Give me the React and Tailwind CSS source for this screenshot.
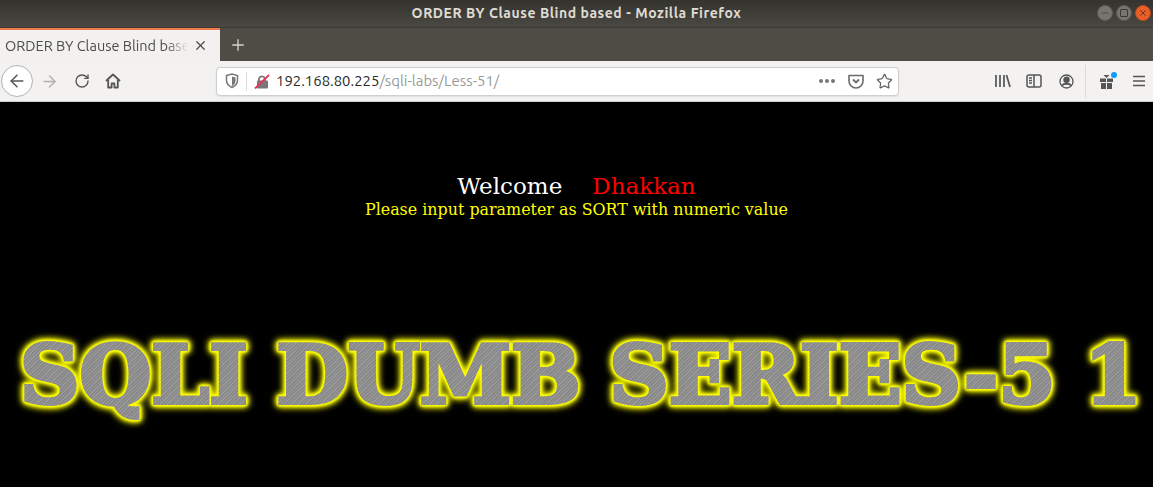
import React from 'react';
import { ArrowLeft, ArrowRight, RotateCw, Plus, X, Minus, Star } from 'lucide-react';

const UI_FONT = "font-['Ubuntu','Noto_Sans','Open_Sans',sans-serif]";

const WindowButton = ({ className, children }) => (
  <div className={`w-[16px] h-[16px] rounded-full flex items-center justify-center ${className}`}>
    {children}
  </div>
);

const TitleBar = () => (
  <div className="relative h-[28px] flex items-center justify-center bg-gradient-to-b from-[#34332f] to-[#4a4842] border-b border-[#3a3934]">
    <span className={`text-[14px] tracking-[0.55px] font-bold text-[#dfdbd2] ${UI_FONT}`}>ORDER BY Clause Blind based - Mozilla Firefox</span>
    <div className="absolute right-[2px] top-[5px] flex gap-[3px]">
      <WindowButton className="bg-[#77756f] border border-[#5c5a55]"><Minus size={10} strokeWidth={1.5} className="text-[#3a3934]" /></WindowButton>
      <WindowButton className="bg-[#77756f] border border-[#5c5a55]"><div className="w-[8px] h-[8px] border border-[#3a3934] rounded-[1px]" /></WindowButton>
      <WindowButton className="bg-[#e95f2a] border border-[#b9491f]"><X size={10} strokeWidth={1.8} className="text-[#3a2a20]" /></WindowButton>
    </div>
  </div>
);

const TabStrip = () => (
  <div className="h-[33px] flex bg-[#4f4c45]">
    <div className="w-[220px] bg-[#f2f1ef] border-t-2 border-[#f07a4d] flex items-center pl-[5px] pr-[12px]">
      <span className={`flex-1 overflow-hidden whitespace-nowrap text-[14.5px] text-[#4c4c4c] [mask-image:linear-gradient(to_right,black_88%,transparent)] ${UI_FONT}`}>
        ORDER BY Clause Blind based
      </span>
      <X size={15} strokeWidth={2} className="ml-[5px] text-[#4c4c4c]" />
    </div>
    <div className="w-[35px] flex items-center justify-center">
      <Plus size={18} strokeWidth={1.8} className="text-[#d6d3cc]" />
    </div>
  </div>
);

const HomeIcon = () => (
  <svg width="16" height="16" viewBox="0 0 16 16" fill="none" stroke="#555" strokeWidth="1.8">
    <path d="M1 8 8 1.500 15 8" strokeLinejoin="round" />
    <path d="M3.200 7v7.500h3.400v-4h2.800v4h3.400V7" strokeLinejoin="round" />
  </svg>
);

const ShieldIcon = () => (
  <svg width="14" height="16" viewBox="0 0 14 16" fill="none">
    <path d="M1.500 2.500 7 1l5.500 1.500v5c0 3.500-2.500 5.500-5.500 7-3-1.500-5.500-3.500-5.500-7z" stroke="#777" strokeWidth="1.500" />
    <path d="M7 3.500v9.500c2-1 3.500-2.500 3.500-5.500V4.500z" fill="#777" />
  </svg>
);

const InsecureLock = () => (
  <svg width="16" height="16" viewBox="0 0 16 16">
    <path d="M5 8V5.500a3.200 3.200 0 0 1 6 0V8" fill="none" stroke="#777" strokeWidth="1.800" />
    <rect x="3" y="7.500" width="11" height="8" rx="1" fill="#777" />
    <path d="M1 15.500 15 2" stroke="#f0325a" strokeWidth="1.800" />
  </svg>
);

const PocketIcon = () => (
  <svg width="16" height="15" viewBox="0 0 16 15" fill="none" stroke="#6a6a6a" strokeWidth="1.600">
    <path d="M1 1.500h14v5.500a7 7 0 0 1-14 0z" strokeLinejoin="round" />
    <path d="m5 5.500 3 3 3-3" strokeWidth="1.800" />
  </svg>
);

const UrlBar = () => (
  <div className="ml-[95px] w-[683px] h-[29px] bg-white border border-[#cfcfcf] rounded-[4px] flex items-center shadow-[0_1px_2px_rgba(0,0,0,0.08)]">
    <div className="w-[29px] flex justify-center"><ShieldIcon /></div>
    <div className="w-px h-[19px] bg-[#dcdcdc]" />
    <div className="ml-[7px]"><InsecureLock /></div>
    <div className={`ml-[6px] flex-1 text-[14.9px] ${UI_FONT}`}>
      <span className="text-[#2a2a2a]">192.168.80.225</span>
      <span className="text-[#9a9a9a]">/sqli-labs/Less-51/</span>
    </div>
    <div className="flex gap-[2px] mr-[13px]">
      <span className="w-[4px] h-[4px] rounded-full bg-[#777]" />
      <span className="w-[4px] h-[4px] rounded-full bg-[#777]" />
      <span className="w-[4px] h-[4px] rounded-full bg-[#777]" />
    </div>
    <div className="mr-[12px]"><PocketIcon /></div>
    <Star size={17} strokeWidth={1.8} className="mr-[5px] text-[#666]" />
  </div>
);

const ToolbarRight = () => (
  <div className="ml-[96px] flex items-center">
    <svg width="16" height="14" viewBox="0 0 16 14" stroke="#555" strokeWidth="1.700" fill="none">
      <path d="M1 1v12M5 1v12M9 1v12M11.500 1l3.500 12" />
    </svg>
    <svg className="ml-[15px]" width="16" height="14" viewBox="0 0 16 14" fill="none" stroke="#555" strokeWidth="1.500">
      <rect x="1" y="1" width="14" height="12" rx="2" />
      <path d="M8 1v12M3 4h3M3 6.500h3M3 9h3" />
    </svg>
    <svg className="ml-[17px]" width="15" height="15" viewBox="0 0 15 15" fill="none" stroke="#555" strokeWidth="1.300">
      <circle cx="7.500" cy="7.500" r="6.500" />
      <circle cx="7.500" cy="5.800" r="2.600" fill="#555" />
      <path d="M3 11.500c1.500-2.500 7.500-2.500 9 0" strokeWidth="2" />
    </svg>
    <div className="ml-[11px] w-px h-[33px] bg-[#dcdbd9]" />
    <div className="relative ml-[13px]">
      <svg width="15" height="15" viewBox="0 0 15 15" fill="#555">
        <rect x="1" y="4.500" width="6" height="3.500" />
        <rect x="8" y="4.500" width="6" height="3.500" />
        <rect x="2" y="9" width="5" height="6" />
        <rect x="8" y="9" width="5" height="6" />
        <path d="M4.500 1h6l-3 3z" />
      </svg>
      <span className="absolute -top-[2px] -right-[3px] w-[6px] h-[6px] rounded-full bg-[#0a9dff]" />
    </div>
    <svg className="ml-[19px]" width="12" height="12" viewBox="0 0 12 12" stroke="#555" strokeWidth="1.500">
      <path d="M0 1.500h12M0 6h12M0 10.500h12" />
    </svg>
  </div>
);

const Toolbar = () => (
  <div className="h-[41px] flex items-center bg-[#f3f2f0] border-b border-[#cdcdcd]">
    <div className="ml-[1px] w-[32px] h-[32px] rounded-full bg-white border border-[#b3b3b3] flex items-center justify-center">
      <ArrowLeft size={20} strokeWidth={1.800} className="text-[#555]" />
    </div>
    <ArrowRight size={19} strokeWidth={1.800} className="ml-[7px] text-[#b0b0b0]" />
    <RotateCw size={16} strokeWidth={2} className="ml-[15px] text-[#555]" />
    <div className="ml-[15px]"><HomeIcon /></div>
    <UrlBar />
    <ToolbarRight />
  </div>
);

const App = () => (
  <div className="w-[1153px] h-[487px] overflow-hidden bg-black flex flex-col">
    <TitleBar />
    <TabStrip />
    <Toolbar />
    <div className="flex-1 font-['DejaVu_Serif',serif] text-center">
      <div className="pt-[70px] text-[23px] leading-[28px] text-white">
        Welcome<span className="inline-block w-[30px]" /><span className="text-[#ff0000]">Dhakkan</span>
      </div>
      <div className="text-[15.9px] leading-[19px] text-[#ffff00]">Please input parameter as SORT with numeric value</div>
      <div className="mt-[108px] pl-[20px] text-left [filter:drop-shadow(0_0_1px_#ffff00)_drop-shadow(0_0_1px_#ffff00)_drop-shadow(0_0_1px_#ffff00)_drop-shadow(0_0_3px_#ffff00)_drop-shadow(0_0_2px_#aaaa00)]">
        <span className="inline-block origin-left scale-x-[1.03] whitespace-nowrap font-bold text-[80px] leading-[96px] [-webkit-text-stroke:4px_transparent] text-transparent bg-clip-text bg-[repeating-linear-gradient(135deg,#8c8c8c_0px,#a2a2a2_1px,#7e7e7e_2px,#969696_3px,#858585_5px)]">
          SQLI DUMB SERIES-5 1
        </span>
      </div>
    </div>
  </div>
);

export default App;
